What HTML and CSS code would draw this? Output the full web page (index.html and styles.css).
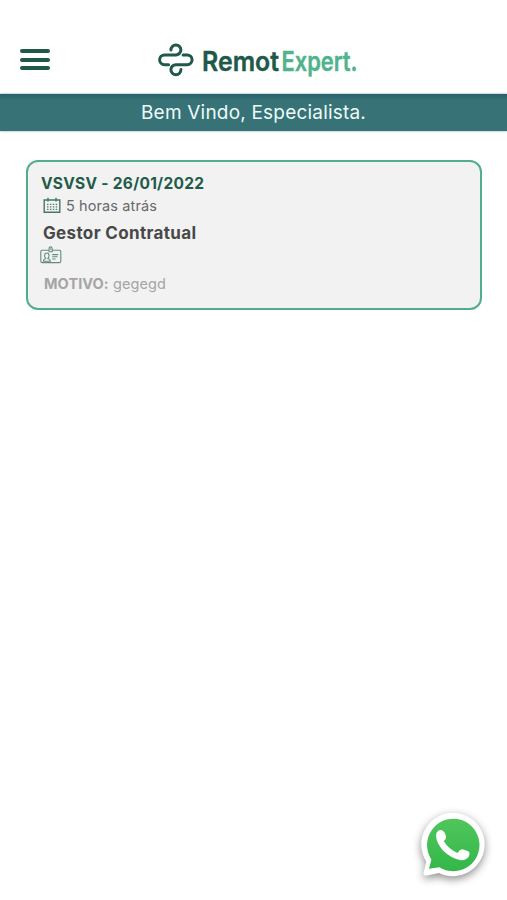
FILE: index.html
```html
<!DOCTYPE html>
<html lang="pt-BR">
<head>
  <meta charset="UTF-8">
  <meta name="viewport" content="width=device-width, initial-scale=1">
  <title>RemotExpert</title>
  <link rel="stylesheet" href="styles.css">
</head>
<body>
  <header class="topbar">
    <button class="menu" aria-label="Menu">
      <span></span>
      <span></span>
      <span></span>
    </button>
    <svg class="logo" width="204" height="48" viewBox="0 0 204 48">
      <g class="logo-mark">
        <path d="M12.9 10A5 5 0 1 1 17.9 14.9H6.5a4.9 4.9 0 0 0 0 9.8H10.6"/>
        <path d="M22.9 29.6A5 5 0 1 1 17.9 24.7H29.2a4.9 4.9 0 0 0 0-9.8H25.1"/>
      </g>
      <text class="logo-remot" x="44" y="31.3" textLength="77" lengthAdjust="spacingAndGlyphs">Remot</text>
      <text class="logo-expert" x="123.5" y="31.3" textLength="76" lengthAdjust="spacingAndGlyphs">Expert.</text>
    </svg>
  </header>

  <div class="welcome">Bem Vindo, Especialista.</div>

  <main class="content">
    <div class="card">
      <div class="card-title">VSVSV - 26/01/2022</div>
      <div class="card-time">
        <svg width="18" height="17" viewBox="0 0 18 17">
          <path class="line" d="M1.2 3H16.8V15.2H1.2ZM5 .8V4.4M13 .8V4.4"/>
          <path class="dots" d="M4 7.4H14.2M4 9.9H14.2M4 12.4H14.2"/>
        </svg>
        <span>5 horas atrás</span>
      </div>
      <div class="card-role">Gestor Contratual</div>
      <!-- Crachá -->
      <svg class="card-badge" width="22" height="18" viewBox="0 0 22 18">
        <path d="M8.8 4.2H2.2Q.8 4.2.8 5.6V15.2Q.8 16.6 2.2 16.6H19.4Q20.8 16.6 20.8 15.2V5.6Q20.8 4.2 19.4 4.2H12.4"/>
        <path d="M9 5.8V3.4Q9 .9 10.6 .9T12.2 3.4V5.8ZM10.6 2.6V3.8"/>
        <path d="M3.3 15.2Q3.3 13.4 5.8 12.6Q4.6 11.2 4.6 9.4Q4.6 7 6.8 7T9 9.4Q9 11.2 7.9 12.6Q10.4 13.4 10.4 15.2Z"/>
        <path d="M12.2 8.6H18.2M12.2 10.8H17.6M12.2 13H15.6"/>
      </svg>
      <div class="card-reason"><strong>MOTIVO:</strong> gegegd</div>
    </div>
  </main>

  <a class="whatsapp" href="#" aria-label="WhatsApp">
    <svg width="70" height="72" viewBox="0 0 70 72">
      <defs>
        <linearGradient id="green" x1="0" y1="0" x2="0" y2="1">
          <stop offset="0" stop-color="#50c65c"/>
          <stop offset="1" stop-color="#33b748"/>
        </linearGradient>
      </defs>
      <path fill="#fff" d="M8.6 65.6Q5.8 65.4 6.6 62.6L9.3 51.6A31.7 31.7 0 1 1 22 62.9L10 65.5Z"/>
      <path fill="url(#green)" d="M12 58.8L14.4 49.4A26.2 26.2 0 1 1 22.4 57.2Z"/>
      <path fill="#fff" d="M21.5 20.5Q25.5 18.6 27.5 22.5Q29.5 26.5 29 28Q28.5 30 26.8 31Q31 38.5 40.5 43Q42.5 39.5 45 39.2Q48 39.6 51.5 41.6Q53.4 43 51.8 46.5Q49 50.6 44 50.3Q34 48.5 26 40.5Q19.5 33 19 26Q19.3 22 21.5 20.5Z"/>
    </svg>
  </a>
</body>
</html>
```
FILE: styles.css
```css
* {
  box-sizing: border-box;
}
body {
  margin: 0;
  min-height: 100vh;
  background-color: #fff;
  font-family: Inter, "Liberation Sans", sans-serif;
}

/* Cabeçalho */
.topbar {
  display: flex;
  align-items: flex-start;
  height: 94px;
  padding: 40px 20px 0;
}
.menu {
  display: flex;
  flex-direction: column;
  gap: 4.6px;
  width: 30px;
  margin: 9px 108px 0 0;
  padding: 0;
  border: none;
  background: none;
}
.menu span {
  height: 4px;
  border-radius: 2px;
  background-color: #20584a;
}
.logo {
  overflow: visible;
}
.logo-mark {
  fill: none;
  stroke: #20584a;
  stroke-width: 3;
  stroke-linecap: round;
}
.logo text {
  font-size: 27px;
  font-weight: 600;
  stroke-width: 0.4;
  stroke-linejoin: round;
}
.logo-remot {
  fill: #20584a;
  stroke: #20584a;
}
.logo-expert {
  fill: #4fb38b;
  stroke: #4fb38b;
}

/* Faixa de boas-vindas */
.welcome {
  height: 37px;
  line-height: 37px;
  text-align: center;
  font-size: 19px;
  letter-spacing: 0.2px;
  color: #eefafa;
  background: linear-gradient(#2b606a, #367276 6px, #367276);
  box-shadow: 0 0 2px #6f9da0;
}

/* Cartão de atendimento */
.content {
  padding: 29px 25px 0 26px;
}
.card {
  height: 150px;
  padding: 12px 13px 0;
  border: 2px solid #51ae8b;
  border-radius: 12px;
  background-color: #f2f2f2;
}
.card-title {
  height: 20px;
  line-height: 20px;
  font-size: 15.5px;
  font-weight: 700;
  letter-spacing: 0.27px;
  color: #235b49;
}
.card-time {
  display: flex;
  align-items: center;
  gap: 5px;
  height: 23px;
  padding-left: 2px;
  font-size: 14.5px;
  letter-spacing: 0.1px;
  color: #696969;
}
.card-time .line {
  fill: none;
  stroke: #447967;
  stroke-width: 1.4;
}
.card-time .dots {
  fill: none;
  stroke: #55806f;
  stroke-width: 1.4;
  stroke-dasharray: 1.5 1.4;
}
.card-role {
  height: 29px;
  padding-left: 2px;
  line-height: 33px;
  font-size: 17px;
  font-weight: 700;
  letter-spacing: 0.35px;
  color: #484848;
}
.card-badge {
  display: block;
  margin-left: -1px;
  fill: none;
  stroke: #648d7e;
  stroke-width: 1.1;
}
.card-reason {
  margin-top: 11px;
  padding-left: 3px;
  line-height: 18px;
  font-size: 14.5px;
  letter-spacing: 0.08px;
  color: #a5a5a5;
}

/* Botão flutuante do WhatsApp */
.whatsapp {
  position: fixed;
  right: 20px;
  bottom: 18px;
  width: 70px;
  height: 72px;
}
.whatsapp svg {
  display: block;
  filter: drop-shadow(0 3px 4px rgba(0, 0, 0, 0.45));
}
```
